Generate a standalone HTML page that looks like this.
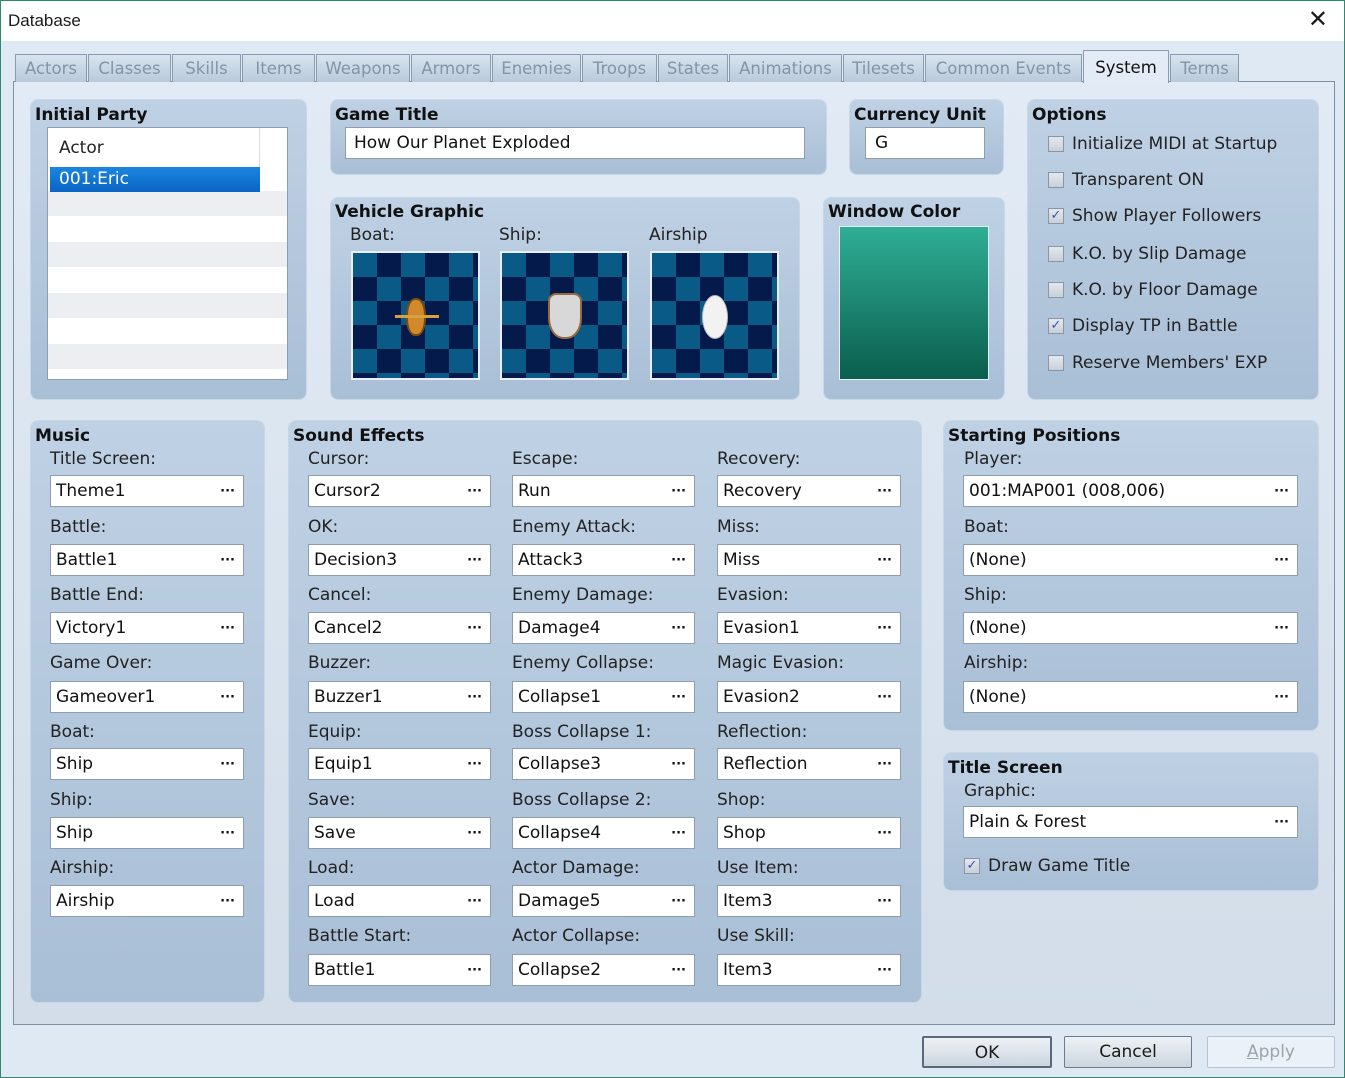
<!DOCTYPE html>
<html><head><meta charset="utf-8"><style>
*{box-sizing:border-box;margin:0;padding:0}
body{width:1345px;height:1078px;background:#dfe9f4;font-family:"DejaVu Sans","Liberation Sans",sans-serif;font-size:17px;color:#1a1a1a;position:relative;overflow:hidden;border:1px solid #2e8a6e}
.a{position:absolute}
.title{left:0;top:0;width:1343px;height:40px;background:#fff}
.tab{position:absolute;top:53px;height:28px;border:1px solid #8a9db0;border-bottom:none;background:linear-gradient(#d8e4ef,#b9cadb);color:#8294a6;font-size:16.5px;text-align:center;line-height:28px;white-space:nowrap}
.content{left:12px;top:80px;width:1322px;height:944px;border:1px solid #7d8fa0;background:linear-gradient(#e2ebf5,#d2dde9)}
.g{position:absolute;border-radius:7px;background:linear-gradient(#bfd1e4,#a9bfd6);box-shadow:0 0 0 1px #c8d7e6}
.h{position:absolute;font-weight:bold;font-size:17px;color:#111}
.l{position:absolute;font-size:17px;color:#222;white-space:nowrap}
.f{position:absolute;height:32px;background:#fff;border:1px solid #8e9eb0;font-size:17px;line-height:30px;padding-left:5px;color:#111;white-space:nowrap}
.f b{position:absolute;right:8px;top:1px;font-size:13px;font-weight:bold}
.chk{position:absolute;width:16px;height:16px;border:1px solid #8a96a4;background:linear-gradient(#e4e8ee,#c9d0d8);font-size:13px;line-height:14px;text-align:center;color:#4a4ab0}
.cb{position:absolute;width:129px;height:129px;border:2px solid #e8eef5;overflow:hidden}
.cb svg{position:absolute;left:0;top:0}
.btn{position:absolute;top:1035px;height:32px;border:1px solid #6c7c8c;border-radius:2px;background:linear-gradient(#eef2f6,#ccd5de);text-align:center;line-height:30px;font-size:17px}
</style></head><body>
<svg width="0" height="0" style="position:absolute"><defs><pattern id="ck" width="48" height="48" patternUnits="userSpaceOnUse"><rect width="48" height="48" fill="#0a5a88"/><rect x="24" width="24" height="24" fill="#031a4a"/><rect y="24" width="24" height="24" fill="#031a4a"/></pattern></defs></svg>
<div class="a title"><span class="a" style="left:7px;top:10px;font-family:'Liberation Sans',sans-serif;font-size:17px">Database</span><span class="a" style="right:16px;top:4px;font-size:24px;font-weight:200;font-family:'Liberation Sans',sans-serif">✕</span></div>
<div class="a content"></div>
<div class="tab" style="left:14px;width:72px">Actors</div>
<div class="tab" style="left:87px;width:83px">Classes</div>
<div class="tab" style="left:171px;width:69px">Skills</div>
<div class="tab" style="left:241px;width:73px">Items</div>
<div class="tab" style="left:315px;width:94px">Weapons</div>
<div class="tab" style="left:410px;width:80px">Armors</div>
<div class="tab" style="left:491px;width:89px">Enemies</div>
<div class="tab" style="left:581px;width:75px">Troops</div>
<div class="tab" style="left:657px;width:70px">States</div>
<div class="tab" style="left:728px;width:113px">Animations</div>
<div class="tab" style="left:842px;width:81px">Tilesets</div>
<div class="tab" style="left:924px;width:157px">Common Events</div>
<div class="tab" style="left:1082px;top:49px;height:33px;width:86px;background:#e3ecf6;color:#111;line-height:34px">System</div>
<div class="tab" style="left:1169px;width:69px">Terms</div>

<div class="g" style="left:30px;top:99px;width:275px;height:299px"></div>
<div class="h" style="left:34px;top:104px">Initial Party</div>
<div class="a" style="left:46px;top:126px;width:241px;height:253px;border:1px solid #8e9eb0;background:#fff">
<div class="a" style="left:0;top:63px;width:239px;height:188px;background:repeating-linear-gradient(#eceef1 0 25px,#fff 25px 51px)"></div>
<div class="a" style="left:211px;top:0;width:1px;height:63px;background:#ddd"></div>
<div class="l" style="left:11px;top:10px">Actor</div>
<div class="a" style="left:2px;top:39px;width:210px;height:25px;background:linear-gradient(#1b86e0,#0a64c4);color:#fff;padding-left:9px;line-height:24px">001:Eric</div>
</div>

<div class="g" style="left:330px;top:99px;width:495px;height:74px"></div>
<div class="h" style="left:334px;top:104px">Game Title</div>
<div class="f" style="left:344px;top:126px;width:460px;padding-left:8px">How Our Planet Exploded</div>

<div class="g" style="left:849px;top:99px;width:153px;height:74px"></div>
<div class="h" style="left:853px;top:104px">Currency Unit</div>
<div class="f" style="left:864px;top:126px;width:120px;padding-left:9px">G</div>

<div class="g" style="left:1027px;top:99px;width:290px;height:299px"></div>
<div class="h" style="left:1031px;top:104px">Options</div>
<div class="chk" style="left:1047px;top:135px"></div><div class="l" style="left:1071px;top:133px">Initialize MIDI at Startup</div>
<div class="chk" style="left:1047px;top:171px"></div><div class="l" style="left:1071px;top:169px">Transparent ON</div>
<div class="chk" style="left:1047px;top:207px">✓</div><div class="l" style="left:1071px;top:205px">Show Player Followers</div>
<div class="chk" style="left:1047px;top:245px"></div><div class="l" style="left:1071px;top:243px">K.O. by Slip Damage</div>
<div class="chk" style="left:1047px;top:281px"></div><div class="l" style="left:1071px;top:279px">K.O. by Floor Damage</div>
<div class="chk" style="left:1047px;top:317px">✓</div><div class="l" style="left:1071px;top:315px">Display TP in Battle</div>
<div class="chk" style="left:1047px;top:354px"></div><div class="l" style="left:1071px;top:352px">Reserve Members' EXP</div>

<div class="g" style="left:330px;top:197px;width:468px;height:201px"></div>
<div class="h" style="left:334px;top:201px">Vehicle Graphic</div>
<div class="l" style="left:349px;top:224px">Boat:</div>
<div class="l" style="left:498px;top:224px">Ship:</div>
<div class="l" style="left:648px;top:224px">Airship</div>
<div class="cb" style="left:350px;top:250px"><svg width="125" height="125"><rect width="125" height="125" fill="url(#ck)"/></svg><div class="a" style="left:53px;top:45px;width:20px;height:38px;border-radius:45%;background:#d08a2c;border:2px solid #7a4a10"></div><div class="a" style="left:42px;top:62px;width:44px;height:3px;background:#d8a040"></div></div>
<div class="cb" style="left:499px;top:250px"><svg width="125" height="125"><rect width="125" height="125" fill="url(#ck)"/></svg><div class="a" style="left:46px;top:40px;width:34px;height:46px;border-radius:8px 8px 45% 45%;background:#d8d8d8;border:2px solid #9a6a3a"></div></div>
<div class="cb" style="left:649px;top:250px"><svg width="125" height="125"><rect width="125" height="125" fill="url(#ck)"/></svg><div class="a" style="left:50px;top:42px;width:26px;height:44px;border-radius:50%;background:#f2f2f2;border:1px solid #bbb"></div></div>

<div class="g" style="left:823px;top:197px;width:180px;height:201px"></div>
<div class="h" style="left:827px;top:201px">Window Color</div>
<div class="a" style="left:838px;top:225px;width:150px;height:154px;border:1px solid #e8eef5;background:linear-gradient(#2fae96,#0a5e4d)"></div>

<div class="g" style="left:30px;top:420px;width:233px;height:581px"></div>
<div class="h" style="left:34px;top:425px">Music</div>
<div class="g" style="left:288px;top:420px;width:632px;height:581px"></div>
<div class="h" style="left:292px;top:425px">Sound Effects</div>
<div class="g" style="left:943px;top:420px;width:374px;height:309px"></div>
<div class="h" style="left:947px;top:425px">Starting Positions</div>
<div class="g" style="left:943px;top:752px;width:374px;height:137px"></div>
<div class="h" style="left:947px;top:757px">Title Screen</div>
<div class="l" style="left:963px;top:780px">Graphic:</div>
<div class="f" style="left:962px;top:805px;width:335px">Plain &amp; Forest<b>···</b></div>
<div class="chk" style="left:963px;top:857px">✓</div><div class="l" style="left:987px;top:855px">Draw Game Title</div>

<div class="l" style="left:49px;top:448px">Title Screen:</div><div class="f" style="left:49px;top:474px;width:194px">Theme1<b>···</b></div>
<div class="l" style="left:49px;top:516px">Battle:</div><div class="f" style="left:49px;top:543px;width:194px">Battle1<b>···</b></div>
<div class="l" style="left:49px;top:584px">Battle End:</div><div class="f" style="left:49px;top:611px;width:194px">Victory1<b>···</b></div>
<div class="l" style="left:49px;top:652px">Game Over:</div><div class="f" style="left:49px;top:680px;width:194px">Gameover1<b>···</b></div>
<div class="l" style="left:49px;top:721px">Boat:</div><div class="f" style="left:49px;top:747px;width:194px">Ship<b>···</b></div>
<div class="l" style="left:49px;top:789px">Ship:</div><div class="f" style="left:49px;top:816px;width:194px">Ship<b>···</b></div>
<div class="l" style="left:49px;top:857px">Airship:</div><div class="f" style="left:49px;top:884px;width:194px">Airship<b>···</b></div>

<div class="l" style="left:307px;top:448px">Cursor:</div><div class="f" style="left:307px;top:474px;width:183px">Cursor2<b>···</b></div>
<div class="l" style="left:307px;top:516px">OK:</div><div class="f" style="left:307px;top:543px;width:183px">Decision3<b>···</b></div>
<div class="l" style="left:307px;top:584px">Cancel:</div><div class="f" style="left:307px;top:611px;width:183px">Cancel2<b>···</b></div>
<div class="l" style="left:307px;top:652px">Buzzer:</div><div class="f" style="left:307px;top:680px;width:183px">Buzzer1<b>···</b></div>
<div class="l" style="left:307px;top:721px">Equip:</div><div class="f" style="left:307px;top:747px;width:183px">Equip1<b>···</b></div>
<div class="l" style="left:307px;top:789px">Save:</div><div class="f" style="left:307px;top:816px;width:183px">Save<b>···</b></div>
<div class="l" style="left:307px;top:857px">Load:</div><div class="f" style="left:307px;top:884px;width:183px">Load<b>···</b></div>
<div class="l" style="left:307px;top:925px">Battle Start:</div><div class="f" style="left:307px;top:953px;width:183px">Battle1<b>···</b></div>

<div class="l" style="left:511px;top:448px">Escape:</div><div class="f" style="left:511px;top:474px;width:183px">Run<b>···</b></div>
<div class="l" style="left:511px;top:516px">Enemy Attack:</div><div class="f" style="left:511px;top:543px;width:183px">Attack3<b>···</b></div>
<div class="l" style="left:511px;top:584px">Enemy Damage:</div><div class="f" style="left:511px;top:611px;width:183px">Damage4<b>···</b></div>
<div class="l" style="left:511px;top:652px">Enemy Collapse:</div><div class="f" style="left:511px;top:680px;width:183px">Collapse1<b>···</b></div>
<div class="l" style="left:511px;top:721px">Boss Collapse 1:</div><div class="f" style="left:511px;top:747px;width:183px">Collapse3<b>···</b></div>
<div class="l" style="left:511px;top:789px">Boss Collapse 2:</div><div class="f" style="left:511px;top:816px;width:183px">Collapse4<b>···</b></div>
<div class="l" style="left:511px;top:857px">Actor Damage:</div><div class="f" style="left:511px;top:884px;width:183px">Damage5<b>···</b></div>
<div class="l" style="left:511px;top:925px">Actor Collapse:</div><div class="f" style="left:511px;top:953px;width:183px">Collapse2<b>···</b></div>

<div class="l" style="left:716px;top:448px">Recovery:</div><div class="f" style="left:716px;top:474px;width:184px">Recovery<b>···</b></div>
<div class="l" style="left:716px;top:516px">Miss:</div><div class="f" style="left:716px;top:543px;width:184px">Miss<b>···</b></div>
<div class="l" style="left:716px;top:584px">Evasion:</div><div class="f" style="left:716px;top:611px;width:184px">Evasion1<b>···</b></div>
<div class="l" style="left:716px;top:652px">Magic Evasion:</div><div class="f" style="left:716px;top:680px;width:184px">Evasion2<b>···</b></div>
<div class="l" style="left:716px;top:721px">Reflection:</div><div class="f" style="left:716px;top:747px;width:184px">Reflection<b>···</b></div>
<div class="l" style="left:716px;top:789px">Shop:</div><div class="f" style="left:716px;top:816px;width:184px">Shop<b>···</b></div>
<div class="l" style="left:716px;top:857px">Use Item:</div><div class="f" style="left:716px;top:884px;width:184px">Item3<b>···</b></div>
<div class="l" style="left:716px;top:925px">Use Skill:</div><div class="f" style="left:716px;top:953px;width:184px">Item3<b>···</b></div>

<div class="l" style="left:963px;top:448px">Player:</div><div class="f" style="left:962px;top:474px;width:335px">001:MAP001 (008,006)<b>···</b></div>
<div class="l" style="left:963px;top:516px">Boat:</div><div class="f" style="left:962px;top:543px;width:335px">(None)<b>···</b></div>
<div class="l" style="left:963px;top:584px">Ship:</div><div class="f" style="left:962px;top:611px;width:335px">(None)<b>···</b></div>
<div class="l" style="left:963px;top:652px">Airship:</div><div class="f" style="left:962px;top:680px;width:335px">(None)<b>···</b></div>

<div class="btn" style="left:921px;width:130px;border:2px solid #5a6a7c">OK</div>
<div class="btn" style="left:1063px;width:128px">Cancel</div>
<div class="btn" style="left:1206px;width:128px;background:#eaf1f9;border-color:#b8c4d0;color:#9aa4ae"><u>A</u>pply</div>
</body></html>
